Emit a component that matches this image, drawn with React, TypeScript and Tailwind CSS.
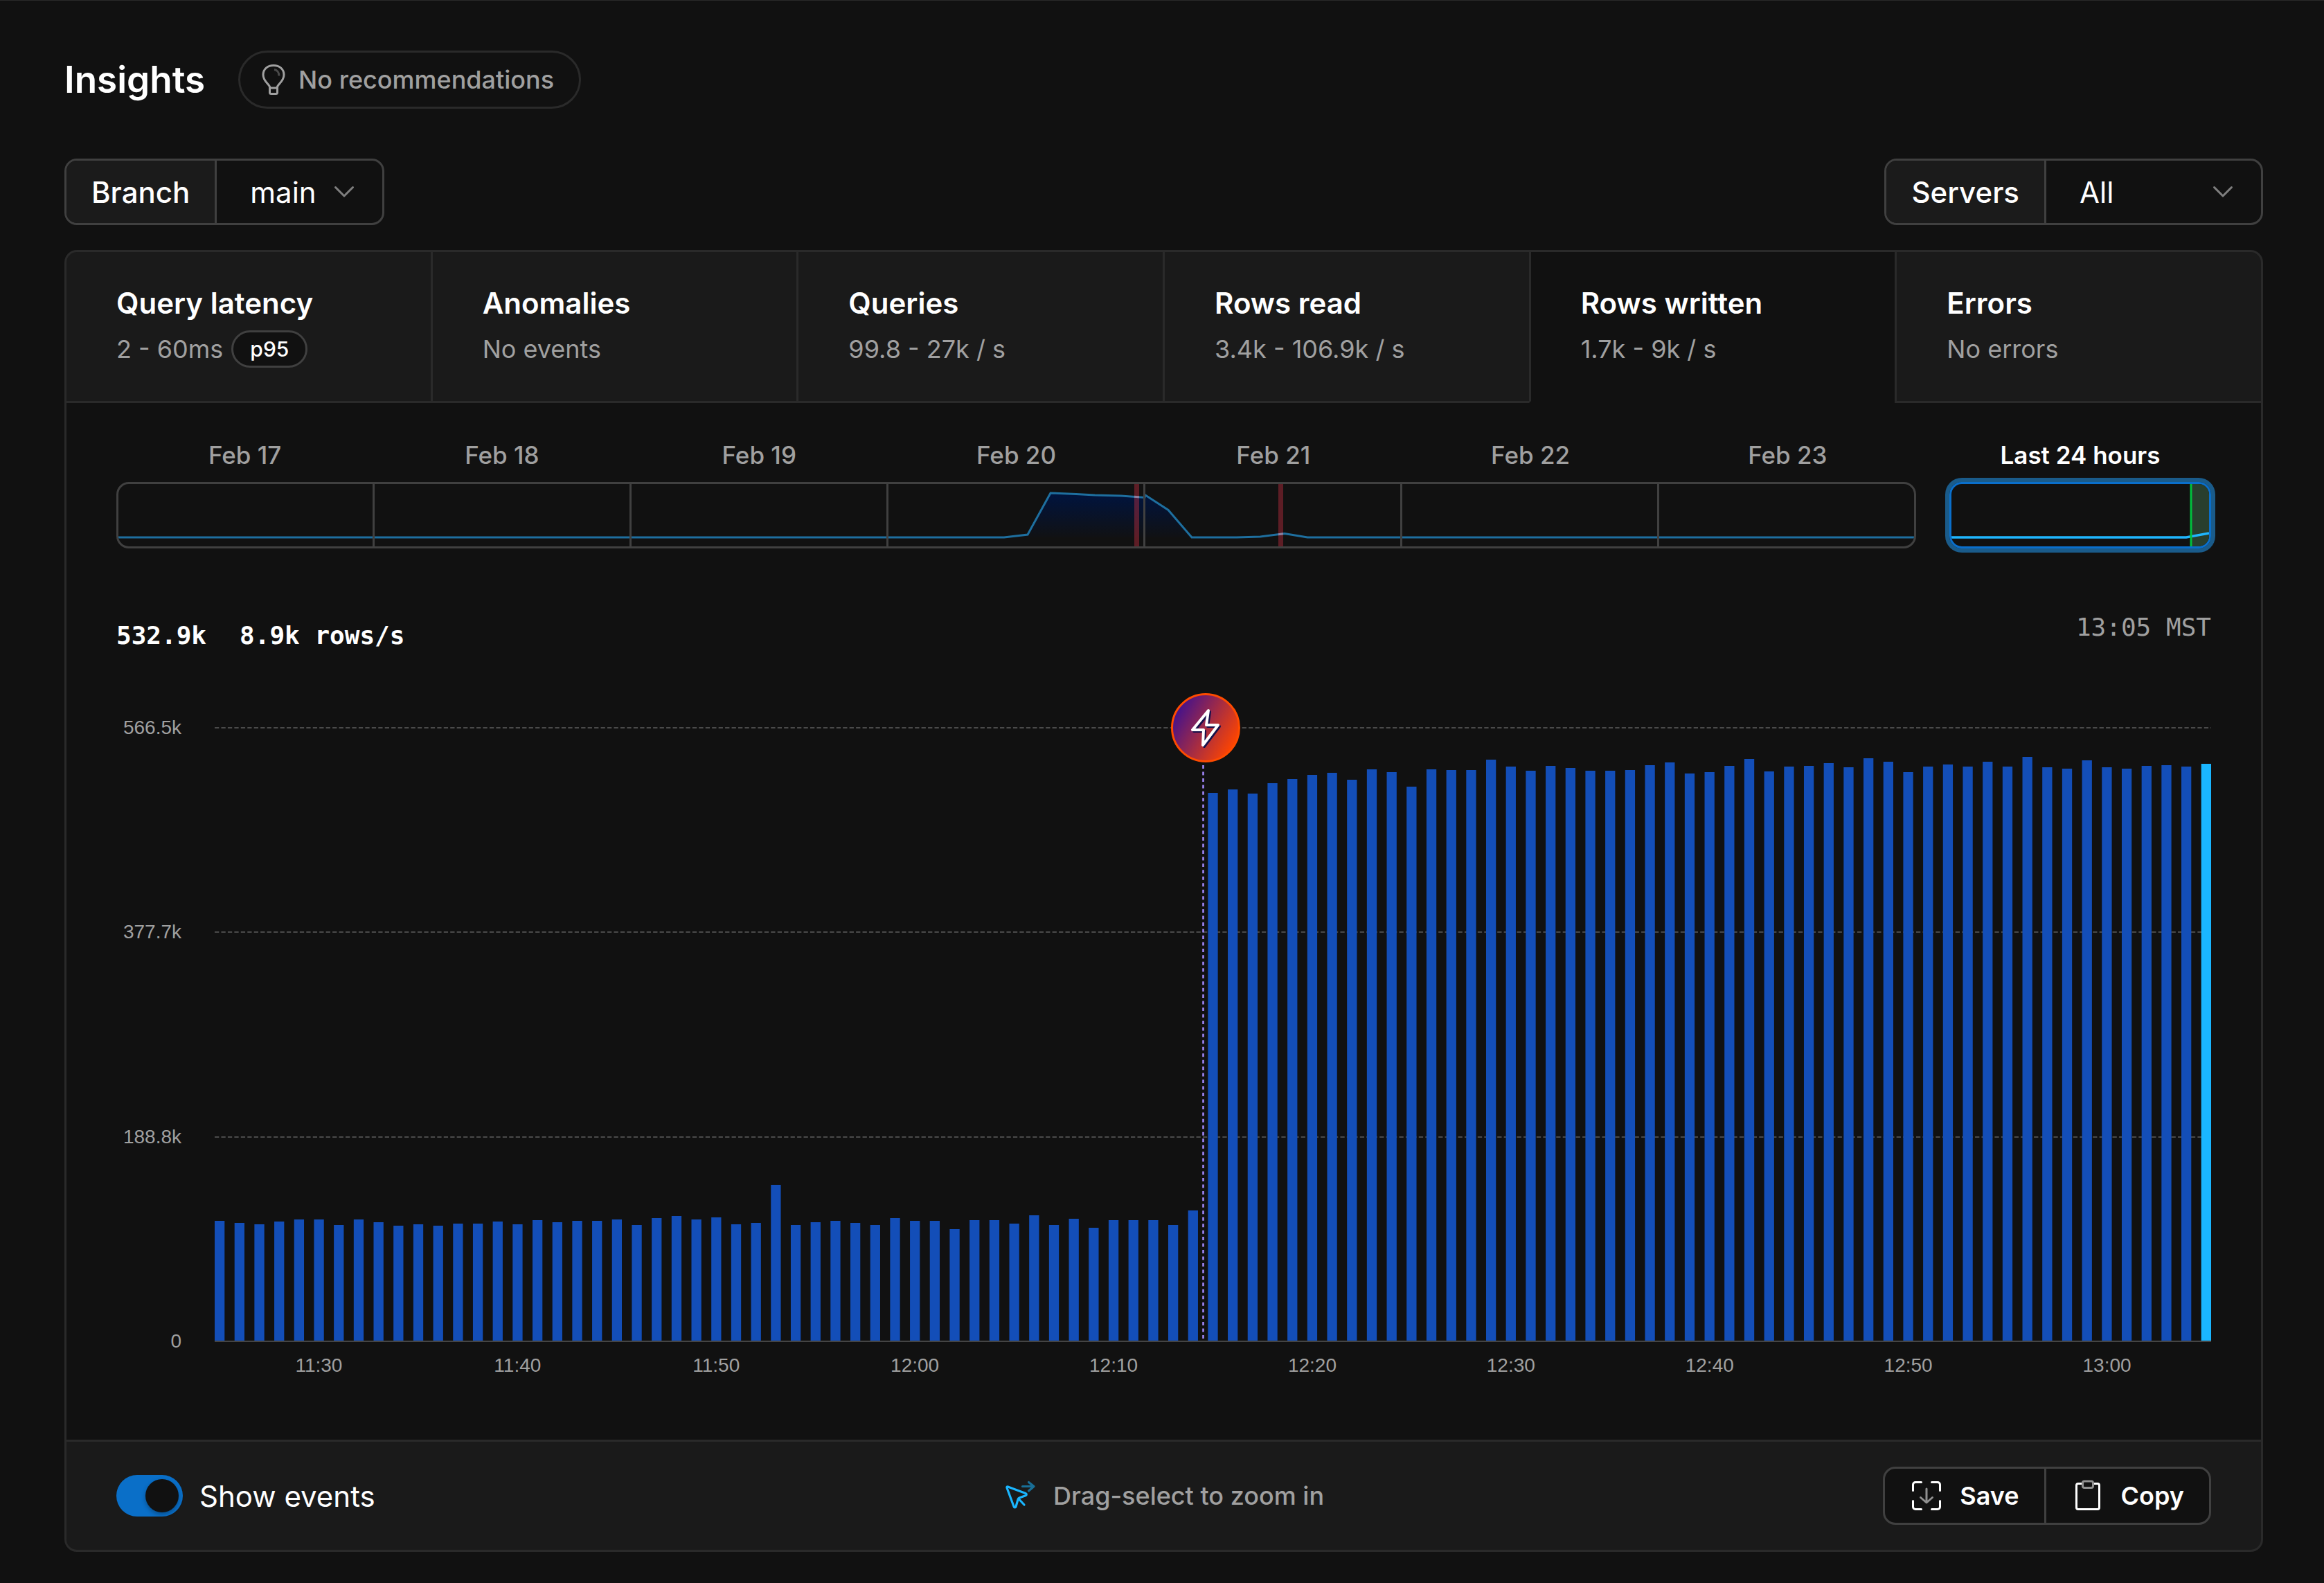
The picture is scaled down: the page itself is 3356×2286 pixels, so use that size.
import React, { useState } from 'react';

type Metric = {
  name: string;
  summary: string;
  badge?: string;
};

const METRICS: Metric[] = [
  { name: 'Query latency', summary: '2 - 60ms', badge: 'p95' },
  { name: 'Anomalies', summary: 'No events' },
  { name: 'Queries', summary: '99.8 - 27k / s' },
  { name: 'Rows read', summary: '3.4k - 106.9k / s' },
  { name: 'Rows written', summary: '1.7k - 9k / s' },
  { name: 'Errors', summary: 'No errors' },
];

const DAYS = ['Feb 17', 'Feb 18', 'Feb 19', 'Feb 20', 'Feb 21', 'Feb 22', 'Feb 23'];

const Y_TICKS = ['566.5k', '377.7k', '188.8k', '0'];
const X_TICKS = ['11:30', '11:40', '11:50', '12:00', '12:10', '12:20', '12:30', '12:40', '12:50', '13:00'];

// One bar per minute, in plot units (886 units = 566.5k rows)
const BARS = [
  174, 171, 169, 173, 176, 176, 168, 176, 172, 167, 169, 167, 170, 170, 173, 169, 175, 172, 174, 174,
  176, 168, 178, 181, 176, 179, 169, 171, 226, 168, 172, 174, 171, 168, 178, 174, 174, 162, 175, 175,
  170, 182, 168, 177, 164, 175, 175, 175, 168, 189, 792, 797, 791, 806, 812, 818, 821, 811, 826, 822,
  801, 826, 825, 825, 840, 830, 824, 831, 828, 824, 824, 825, 832, 836, 820, 822, 831, 841, 823, 830,
  831, 835, 829, 842, 837, 822, 830, 833, 830, 837, 830, 844, 829, 827, 839, 829, 827, 831, 832, 830,
  834,
];

const PLOT_WIDTH = 2883;
const PLOT_HEIGHT = 888;
const BAR_WIDTH = 14.3;
const BAR_STEP = (PLOT_WIDTH - BAR_WIDTH) / (BARS.length - 1);

function BulbIcon() {
  return (
    <svg className="size-12 shrink-0" viewBox="0 0 48 48" fill="none" stroke="currentColor" strokeWidth="3" aria-hidden="true">
      <path d="M19 36c0-5-10-9-10-19C9 8.500 15.500 3.500 24 3.500S39 8.500 39 17c0 10-10 14-10 19" />
      <path d="M18.500 36h11v6.500a2 2 0 0 1-2 2h-7a2 2 0 0 1-2-2z" />
      <path d="M25 9.500c4 .5 7 4 7 9" opacity=".4" />
    </svg>
  );
}

function ChevronIcon({ className }: { className: string }) {
  return (
    <svg className={className} viewBox="0 0 30 18" fill="none" stroke="#7f7f7f" strokeWidth="3" strokeLinecap="round" strokeLinejoin="round" aria-hidden="true">
      <path d="M2.500 2.500 15 15 27.500 2.500" />
    </svg>
  );
}

function Filter({ id, label, option, selectClass }: { id: string; label: string; option: string; selectClass: string }) {
  return (
    <div className="flex h-24 overflow-hidden rounded-[18px] border-[3px] border-[#404040]">
      <label htmlFor={id} className="flex items-center border-r-[3px] border-[#404040] bg-[#1b1b1b] px-9 text-[42px] font-medium">
        {label}
      </label>
      <div className="relative">
        <select id={id} className={`h-full appearance-none bg-transparent pl-12 text-[42px] outline-none ${selectClass}`}>
          <option>{option}</option>
        </select>
        <ChevronIcon className="pointer-events-none absolute right-10 top-1/2 w-[30px] -translate-y-1/2" />
      </div>
    </div>
  );
}

function MetricTab({ metric, active, onSelect }: { metric: Metric; active: boolean; onSelect: () => void }) {
  return (
    <button
      type="button"
      role="tab"
      aria-selected={active}
      onClick={onSelect}
      className={`flex flex-1 flex-col items-start gap-3 border-t-[3px] border-b-[3px] border-l-[3px] border-[#2a2a2a] px-[72px] pt-[47px] pb-12 text-left first:rounded-tl-[18px] last:rounded-tr-[18px] last:border-r-[3px] ${
        active ? 'border-b-transparent bg-[#111111]' : 'bg-[#1a1a1a]'
      }`}
    >
      <span className="text-[42px] leading-[54px] font-semibold">{metric.name}</span>
      <span className="flex items-center gap-3 text-[36px] leading-[54px] text-[#a0a0a0]">
        {metric.summary}
        {metric.badge && (
          <span className="rounded-full border-[3px] border-[#404040] bg-[#111111] px-6 text-[30px] leading-[48px] font-medium text-white">
            {metric.badge}
          </span>
        )}
      </span>
    </button>
  );
}

function WeekStrip() {
  return (
    <div className="flex-1">
      <div className="mb-3 grid grid-cols-7 text-center text-[35px] leading-[54px] font-medium text-[#a0a0a0]">
        {DAYS.map((day) => (
          <span key={day}>{day}</span>
        ))}
      </div>
      <div className="h-24 overflow-hidden rounded-[18px] border-[3px] border-[#404040]">
        <svg className="h-full w-full" viewBox="0 0 2593 90" preserveAspectRatio="none" fill="none" aria-hidden="true">
          <defs>
            <linearGradient id="strip-fill" x1="0" y1="13" x2="0" y2="80" gradientUnits="userSpaceOnUse">
              <stop offset="0" stopColor="#00143f" />
              <stop offset="1" stopColor="#00143f" stopOpacity="0" />
            </linearGradient>
          </defs>
          <path d="M1279 77 1313 73 1346 13 1383 14.500 1410 16 1448 17 1482 19.500 1483 16 1516 37.500 1550 77z" fill="url(#strip-fill)" />
          <rect x="1467" width="7" height="90" fill="#e5344a" opacity=".36" />
          <rect x="1675" width="7" height="90" fill="#e5344a" opacity=".36" />
          <path
            d="M0 77H1279L1313 73 1346 13 1383 14.500 1410 16 1448 17 1482 19.500 1483 16 1516 37.500 1550 77H1615L1649 76 1684 71.500 1717 77H2593"
            stroke="#1e6f9f"
            strokeWidth="3"
          />
          <path d="M1467 18.300 1474 18.800M1675 72.800 1682 71.800" stroke="#8f7f9d" strokeWidth="3" />
          {DAYS.slice(1).map((day, i) => (
            <path key={day} d={`M${371 * (i + 1) - 2.5} 0V90`} stroke="#404040" strokeWidth="3" />
          ))}
        </svg>
      </div>
    </div>
  );
}

function LastDay() {
  return (
    <div className="w-[378px] shrink-0">
      <div className="mb-3 text-center text-[35px] leading-[54px] font-semibold">Last 24 hours</div>
      <div className="h-24 overflow-hidden rounded-[18px] border-[3px] border-[#0a6fcb] shadow-[0_0_0_6px_#1a5b8a]">
        <svg className="h-full w-full" viewBox="0 0 372 90" preserveAspectRatio="none" fill="none" aria-hidden="true">
          <rect x="346" width="26" height="90" fill="#283f2e" />
          <path d="M0 77H339L372 71" stroke="#1fb6ff" strokeWidth="3.500" />
          <path d="M346 0V90" stroke="#00c03c" strokeWidth="3" />
        </svg>
      </div>
    </div>
  );
}

function EventBadge() {
  return (
    <button
      type="button"
      aria-label="Event"
      className="absolute top-px left-[calc(50%-11px)] size-[100px] -translate-x-1/2 -translate-y-1/2 overflow-hidden rounded-full border-[3px] border-[#ff4b00] bg-linear-[120deg,#3a0f93_8%,#ff4500_88%]"
    >
      <svg className="size-full" viewBox="3 3 94 94" fill="none" strokeWidth="4" strokeLinejoin="round" aria-hidden="true">
        <path d="M56 27 53 48H70L48 77 49 55H33z" stroke="#16104a" />
        <path d="M54 25 51 46H68L46 75 47 53H31z" stroke="#ffffff" />
      </svg>
    </button>
  );
}

function RowsChart() {
  return (
    <div className="mt-[105px] flex gap-12 font-['Liberation_Sans',sans-serif] text-[28px] text-[#a0a0a0]">
      <div className="mt-px flex h-[886px] w-[94px] shrink-0 flex-col justify-between">
        {Y_TICKS.map((tick) => (
          <span key={tick} className="flex h-0 items-center justify-end leading-none">
            {tick}
          </span>
        ))}
      </div>
      <div className="relative flex-1">
        <svg className="h-[888px] w-full" viewBox={`0 0 ${PLOT_WIDTH} ${PLOT_HEIGHT}`} preserveAspectRatio="none" fill="none" aria-hidden="true">
          {[1, 296, 592].map((y) => (
            <path key={y} d={`M0 ${y}H${PLOT_WIDTH}`} stroke="#4a4a4a" strokeWidth="2" strokeDasharray="6.3 3.15" />
          ))}
          {BARS.map((height, i) => (
            <rect
              key={i}
              x={i * BAR_STEP}
              y={887 - height}
              width={BAR_WIDTH}
              height={height}
              fill={i === BARS.length - 1 ? '#1ab6ff' : '#134eb8'}
            />
          ))}
          <path d={`M0 887H${PLOT_WIDTH}`} stroke="#444444" strokeWidth="2" />
          <path d="M1427.500 55V886" stroke="#a58aff" strokeWidth="2.500" strokeDasharray="5 4.460" />
        </svg>
        <EventBadge />
        <div className="mx-[7px] mt-4 grid grid-cols-10 text-center leading-9">
          {X_TICKS.map((tick) => (
            <span key={tick}>{tick}</span>
          ))}
        </div>
      </div>
    </div>
  );
}

function DragIcon() {
  return (
    <svg className="size-12 shrink-0" viewBox="0 0 48 48" fill="none" stroke="#1ab6ff" strokeWidth="3.200" strokeLinecap="round" strokeLinejoin="round" aria-hidden="true">
      <path d="M6.500 11 32 20.500c1.800.7 1.700 2.500 0 3.200l-9 3.300c-1 .4-1.600 1-1.900 2l-3 10.500c-.6 2-2.500 2-3.100 0L5 12.500c-.4-1.200.3-1.900 1.500-1.500z" />
      <path d="M22.500 29 30 37" />
      <path d="M27.500 10.500H44M36.500 4.500 44 10.500 36.500 17" opacity=".55" />
    </svg>
  );
}

function SaveIcon() {
  return (
    <svg className="size-12 shrink-0" viewBox="0 0 48 48" fill="none" stroke="currentColor" strokeWidth="3" strokeLinecap="round" strokeLinejoin="round" aria-hidden="true">
      <path d="M16.500 4.500H8a3.500 3.500 0 0 0-3.500 3.500v8.500M31.500 4.500H40a3.500 3.500 0 0 1 3.500 3.500v8.500M16.500 43.500H8a3.500 3.500 0 0 1-3.500-3.500v-8.500M31.500 43.500H40a3.500 3.500 0 0 0 3.500-3.500v-8.500" />
      <path d="M24 14v19M15.500 26.500 24 34l8.500-7.500" stroke="#909090" />
    </svg>
  );
}

function CopyIcon() {
  return (
    <svg className="size-12 shrink-0" viewBox="0 0 48 48" fill="none" stroke="currentColor" strokeWidth="3" strokeLinejoin="round" aria-hidden="true">
      <path d="M16 6.500h-6a2.500 2.500 0 0 0-2.500 2.500v32a2.500 2.500 0 0 0 2.500 2.500h28a2.500 2.500 0 0 0 2.500-2.500V9a2.500 2.500 0 0 0-2.500-2.500h-6" />
      <rect x="16.500" y="3" width="15" height="9.500" rx="2.500" stroke="#909090" />
    </svg>
  );
}

function PanelFooter() {
  return (
    <div className="grid grid-cols-3 items-center rounded-b-[18px] border-[3px] border-[#2a2a2a] bg-[#1a1a1a] px-[72px] py-9">
      <label className="flex items-center gap-6 text-[42px]">
        <input
          type="checkbox"
          defaultChecked
          className="flex h-[60px] w-24 appearance-none items-center rounded-full bg-[#404040] px-1.5 before:size-12 before:rounded-full before:bg-[#111111] before:shadow-[0_3px_6px_rgba(0,0,0,0.3)] checked:justify-end checked:bg-[#0a6fc8]"
        />
        Show events
      </label>
      <p className="flex items-center justify-center gap-6 text-[36px] font-medium text-[#a0a0a0]">
        <DragIcon />
        Drag-select to zoom in
      </p>
      <div className="flex h-[84px] justify-self-end overflow-hidden rounded-[18px] border-[3px] border-[#404040] bg-[#111111] text-[36px] font-semibold">
        <button type="button" className="flex items-center gap-6 border-r-[3px] border-[#404040] px-9">
          <SaveIcon />
          Save
        </button>
        <button type="button" className="flex items-center gap-6 px-9">
          <CopyIcon />
          Copy
        </button>
      </div>
    </div>
  );
}

export default function App() {
  const [selected, setSelected] = useState('Rows written');

  return (
    <main className="min-h-screen border-t border-[#2a2a2a] bg-[#111111] pt-[72px] pr-[88px] pb-11 pl-[93px] font-['Inter',sans-serif] text-white">
      <header className="flex items-center gap-12">
        <h1 className="text-[53px] leading-[72px] font-semibold">Insights</h1>
        <button type="button" className="flex h-[84px] items-center gap-3 rounded-full border-[3px] border-[#2a2a2a] pr-9 pl-6 text-[36px] font-medium text-[#a0a0a0]">
          <BulbIcon />
          No recommendations
        </button>
      </header>

      <div className="mt-[72px] mb-9 flex justify-between">
        <Filter id="branch" label="Branch" option="main" selectClass="w-[239px]" />
        <Filter id="servers" label="Servers" option="All" selectClass="w-[310px]" />
      </div>

      <section>
        <div role="tablist" className="flex">
          {METRICS.map((metric) => (
            <MetricTab
              key={metric.name}
              metric={metric}
              active={metric.name === selected}
              onSelect={() => setSelected(metric.name)}
            />
          ))}
        </div>

        <div className="border-x-[3px] border-[#2a2a2a] px-[72px] pt-12 pb-[89px]">
          <div className="flex gap-12">
            <WeekStrip />
            <LastDay />
          </div>

          <div className="mt-[87px] flex items-start justify-between font-['DejaVu_Sans_Mono',monospace] text-[36px] leading-[54px]">
            <div className="flex gap-12 pt-3 font-bold">
              <span>532.9k</span>
              <span>8.9k rows/s</span>
            </div>
            <time className="text-[#a0a0a0]">13:05 MST</time>
          </div>

          <RowsChart />
        </div>

        <PanelFooter />
      </section>
    </main>
  );
}
